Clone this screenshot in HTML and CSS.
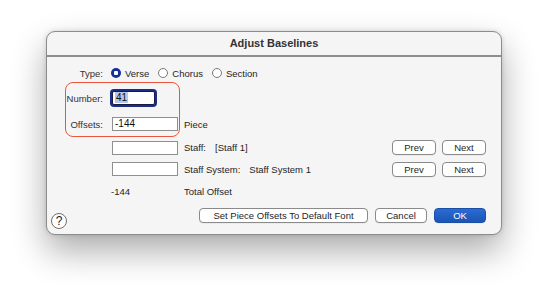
FILE: index.html
```html
<!DOCTYPE html>
<html>
<head>
<meta charset="utf-8">
<link rel="stylesheet" href="styles.css">
</head>
<body>
<div class="dialog">
  <div class="titlebar">Adjust Baselines</div>
  <div class="form">
    <div class="label">Type:</div>
    <div class="radios">
      <span class="radio-item"><span class="radio on"></span>Verse</span>
      <span class="radio-item"><span class="radio"></span>Chorus</span>
      <span class="radio-item"><span class="radio"></span>Section</span>
    </div>

    <div class="label">Number:</div>
    <div class="cell"><div class="field focus"><span class="sel">41</span></div></div>
    <div class="cell span3"></div>

    <div class="label">Offsets:</div>
    <div class="cell"><div class="field">-144</div></div>
    <div class="cell span3">Piece</div>

    <div class="label"></div>
    <div class="cell"><div class="field"></div></div>
    <div class="cell pair"><span>Staff:</span><span>[Staff 1]</span></div>
    <div class="cell"><button class="btn small">Prev</button></div>
    <div class="cell"><button class="btn small">Next</button></div>

    <div class="label"></div>
    <div class="cell"><div class="field"></div></div>
    <div class="cell pair"><span>Staff System:</span><span>Staff System 1</span></div>
    <div class="cell"><button class="btn small">Prev</button></div>
    <div class="cell"><button class="btn small">Next</button></div>

    <div class="label"></div>
    <div class="cell total">-144</div>
    <div class="cell span3">Total Offset</div>
  </div>
  <div class="footer">
    <div class="help">?</div>
    <div class="spacer"></div>
    <button class="btn wide">Set Piece Offsets To Default Font</button>
    <button class="btn mid">Cancel</button>
    <button class="btn mid primary">OK</button>
  </div>
  <div class="annotation"></div>
</div>
</body>
</html>
```
FILE: styles.css
```css
html, body {
  margin: 0;
  background: #ffffff;
}
html {
  height: 100%;
}
body {
  box-sizing: border-box;
  min-height: 298px;
  padding: 31px 0 0 46px;
  font-family: "Liberation Sans", Arial, sans-serif;
  font-size: 9.5px;
  color: #1e1e1e;
}
.dialog {
  position: relative;
  width: 456px;
  height: 204px;
  box-sizing: border-box;
  border: 1px solid #8c8c8c;
  border-radius: 9px;
  background: #f5f5f5;
  box-shadow: 0 16px 34px rgba(0, 0, 0, 0.33), 0 0 5px rgba(0, 0, 0, 0.14);
}
.titlebar {
  height: 23px;
  line-height: 23px;
  text-align: center;
  font-weight: bold;
  font-size: 11px;
  color: #333;
  border-bottom: 2px solid #8e8e8e;
}
.form {
  display: grid;
  grid-template-columns: 65px 72px 208px 50px 44px;
  grid-template-rows: 24px 26px 26px 21px 22px 23px;
  padding: 4px 15px 0 0;
  align-items: center;
}
.label {
  text-align: right;
  padding-right: 9px;
  color: #333;
}
.radios {
  grid-column: 2 / span 4;
  display: flex;
  align-items: center;
  gap: 9px;
  margin-left: -1px;
}
.radio-item {
  display: flex;
  align-items: center;
  gap: 4px;
}
.radio {
  width: 10px;
  height: 10px;
  box-sizing: border-box;
  border-radius: 50%;
  border: 1px solid #7a7a7a;
  background: #fff;
}
.radio.on {
  border: none;
  background: radial-gradient(circle, #fff 0 2px, #12309a 2.5px);
}
.cell {
  display: flex;
  align-items: center;
}
.span3 {
  grid-column: span 3;
}
.pair {
  gap: 9px;
}
.field {
  width: 66px;
  height: 14px;
  box-sizing: border-box;
  border: 1px solid #8f8f8f;
  background: #fff;
  line-height: 12px;
  padding-left: 2px;
  font-size: 10px;
  color: #111;
}
.field.focus {
  width: 43px;
  border: 1px solid #1a1a40;
  border-radius: 2px;
  box-shadow: 0 0 0 2px #1b2e86;
}
.sel {
  background: #b5c8ec;
  padding: 0 1px;
}
.total {
  margin-left: -1px;
}
.btn {
  height: 15px;
  box-sizing: border-box;
  border: 1px solid #8a8a8a;
  border-radius: 4px;
  background: #fff;
  font-family: "Liberation Sans", Arial, sans-serif;
  font-size: 9.5px;
  color: #1e1e1e;
  padding: 0;
  line-height: 13px;
  box-shadow: 0 0.5px 0.5px rgba(0, 0, 0, 0.08);
}
.btn.small {
  width: 44px;
}
.btn.wide {
  width: 169px;
}
.btn.mid {
  width: 52px;
}
.btn.primary {
  background: linear-gradient(#2b6bd2, #1a55b4);
  border-color: #1b4ea6;
  color: #fff;
}
.footer {
  display: flex;
  align-items: flex-start;
  gap: 7px;
  padding: 5px 15px 0 4px;
}
.spacer {
  flex: 1;
}
.help {
  width: 16px;
  height: 16px;
  box-sizing: border-box;
  margin-top: 5px;
  border: 1px solid #6e6e6e;
  border-radius: 50%;
  background: #fff;
  text-align: center;
  line-height: 14px;
  font-size: 12px;
  color: #222;
}
.annotation {
  position: absolute;
  left: 18px;
  top: 50px;
  width: 115px;
  height: 55px;
  box-sizing: border-box;
  border: 1.5px solid #e9553d;
  border-radius: 8px;
}
```
